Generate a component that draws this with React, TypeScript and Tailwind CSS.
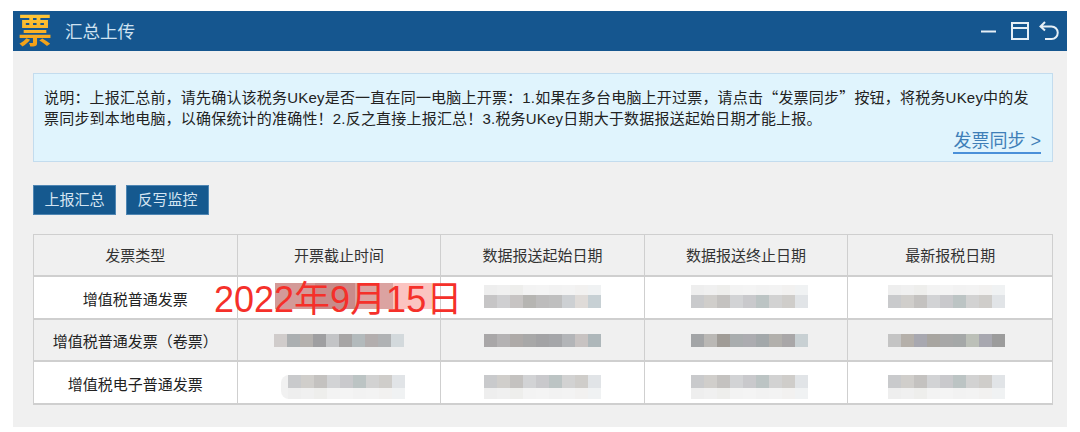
const fontStack = "font-['Liberation_Sans','Noto_Sans_CJK_SC',sans-serif]";

const headers = ["发票类型", "开票截止时间", "数据报送起始日期", "数据报送终止日期", "最新报税日期"];

// blurred-out date cells, one class per mosaic tile
const dark = ["bg-[#a9a7a8]", "bg-[#b4b2b3]", "bg-[#aeaaa8]", "bg-[#a8a8a8]", "bg-[#a3a3a5]", "bg-[#a5a6a9]", "bg-[#b3b5b8]", "bg-[#c8c3c2]", "bg-[#aeb7ba]"];
const darkWide = ["bg-[#d0cccb]", "bg-[#abafb1]", "bg-[#b4b1ae]", "bg-[#9f9fa1]", "bg-[#c3c4c6]", "bg-[#a7a5a5]", "bg-[#b3babc]", "bg-[#b3aeae]", "bg-[#b0b2b4]", "bg-[#d3d9dc]"];
const darkAlt = ["bg-[#a3a5a7]", "bg-[#bab8b5]", "bg-[#a09c97]", "bg-[#a9adae]", "bg-[#acacb0]", "bg-[#a3a8aa]", "bg-[#b2b0ac]", "bg-[#a9a7a8]", "bg-[#c8d0d3]"];
const darkEnd = ["bg-[#c4c4c4]", "bg-[#b5b0aa]", "bg-[#a8a8b0]", "bg-[#a8a5a0]", "bg-[#a8a8a8]", "bg-[#a5a8a8]", "bg-[#bcc0b8]", "bg-[#a8a8b0]", "bg-[#9c9c9c]"];
const mid = ["bg-[#c6c5c6]", "bg-[#cfcfd1]", "bg-[#c7c4c3]", "bg-[#b6b5b2]", "bg-[#bdbcbc]", "bg-[#bfbfbf]", "bg-[#cdd0d3]", "bg-[#dfdbd8]", "bg-[#c7d0d4]"];
const light = ["bg-[#c9cacc]", "bg-[#d0cecb]", "bg-[#c4c2c0]", "bg-[#d2d3d5]", "bg-[#c9c9cc]", "bg-[#bcc4c4]", "bg-[#d2d2d2]", "bg-[#cfcdca]", "bg-[#e1e4e7]"];
const paleTiles = ["bg-[#eeeeee]", "bg-[#f0f0f0]", "bg-[#eeeeec]", "bg-[#f3f3f3]", "bg-[#f4f4f4]", "bg-[#f2f2f2]", "bg-[#f3f3f3]", "bg-[#f2f1f0]", "bg-[#f0f2f3]"];

function TileRow({ tiles, height }: { tiles: string[]; height: string }) {
  return (
    <div className="flex">
      {tiles.map((t, i) => (
        <div key={i} className={`w-[13px] ${height} ${t}`} />
      ))}
    </div>
  );
}

function Mosaic({ tiles, above, below, className = "" }: { tiles: string[]; above?: boolean; below?: boolean; className?: string }) {
  return (
    <div className={`flex flex-col ${className}`}>
      {above && <TileRow tiles={paleTiles} height="h-[10px]" />}
      <TileRow tiles={tiles} height="h-[13px]" />
      {below && <TileRow tiles={paleTiles} height="h-[11px]" />}
    </div>
  );
}

function HeadCell({ label, last }: { label: string; last: boolean }) {
  return (
    <div className={`flex items-center justify-center h-[42px] pt-[3px] text-[15px] text-[#333] bg-[#f0f0f0] border-[#cfcfcf] border-b-2 ${last ? "" : "border-r"}`}>
      {label}
    </div>
  );
}

function Cell({ children, shade, last, height, bottom }: { children: React.ReactNode; shade: boolean; last?: boolean; height: string; bottom?: boolean }) {
  return (
    <div
      className={`flex items-center justify-center text-[15px] text-[#222] border-[#cfcfcf] ${height} ${shade ? "bg-[#f0f0f0]" : "bg-white"} ${last ? "" : "border-r"} ${bottom ? "" : "border-b-2"}`}
    >
      {children}
    </div>
  );
}

function Label({ text }: { text: string }) {
  return <span className="mt-[5px]">{text}</span>;
}

export default function App() {
  return (
    <div className={`w-[1080px] h-[432px] bg-white pt-[11px] pl-[13px] overflow-hidden ${fontStack}`}>
      <div className="relative w-[1054px] h-[416px] bg-[#f0f0f0]">
        <div className="flex items-center justify-between h-[40px] bg-[#15568f] pl-[5px] pr-[8px]">
          <div className="flex items-center">
            <span className="w-[34px] text-[34px] leading-[36px] font-bold text-transparent bg-clip-text bg-gradient-to-b from-[#ffc93a] to-[#f09a10]">票</span>
            <span className="ml-[13px] mt-[2px] text-[17.5px] text-[#cfe2f1]">汇总上传</span>
          </div>
          <div className="flex items-center">
            <svg width="15" height="20" viewBox="0 0 15 20" fill="none" stroke="#e6eff6" strokeWidth="2">
              <path d="M0 10.5h15" />
            </svg>
            <svg className="ml-[15px]" width="18" height="20" viewBox="0 0 18 20" fill="none" stroke="#e6eff6" strokeWidth="2">
              <path d="M1 2h16v16H1zM1 7h16" />
            </svg>
            <svg className="ml-[10px]" width="20" height="20" viewBox="0 0 20 20" fill="none" stroke="#e6eff6" strokeWidth="2">
              <path d="M6 1 1.5 5.5 6 9.5M2 5.5h10.5a5.5 5.5 0 0 1 0 12.5H6" />
            </svg>
          </div>
        </div>

        <div className="ml-[20px] w-[1020px] mt-[22px]">
          <div className="h-[89px] bg-[#e0f4fd] border border-[#c3dcee] pl-[10px] pr-[11px] pt-[12px] text-[15px] tracking-[0.2px] leading-[21px] text-[#222]">
            <p className="whitespace-nowrap">
              说明：上报汇总前，请先确认该税务UKey是否一直在同一电脑上开票：1.如果在多台电脑上开过票，请点击<span className="font-['Noto_Sans_CJK_SC',sans-serif]">“</span>发票同步<span className="font-['Noto_Sans_CJK_SC',sans-serif]">”</span>按钮，将税务UKey中的发
            </p>
            <p className="whitespace-nowrap">
              票同步到本地电脑，以确保统计的准确性！2.反之直接上报汇总！3.税务UKey日期大于数据报送起始日期才能上报。
            </p>
            <div className="flex justify-end mt-[2px]">
              <span className="text-[18px] tracking-normal leading-[21px] text-[#3f7fb8] border-b-2 border-[#4a90d9]">发票同步 &gt;</span>
            </div>
          </div>

          <div className="flex gap-[10px] mt-[23px]">
            <button className="w-[83px] h-[30px] bg-[#15598f] border border-[#4f86b3] text-[15px] text-[#d5e5f2]">上报汇总</button>
            <button className="w-[83px] h-[30px] bg-[#15598f] border border-[#4f86b3] text-[15px] text-[#d5e5f2]">反写监控</button>
          </div>

          <div className="relative mt-[19px] border border-[#cfcfcf] border-b-2 grid grid-cols-5">
            {headers.map((h, i) => (
              <HeadCell key={h} label={h} last={i === 4} />
            ))}

            <Cell shade={false} height="h-[43px]"><Label text="增值税普通发票" /></Cell>
            <Cell shade={false} height="h-[43px]">
              <div className="flex h-[26px] w-[157px] ml-[30px] mb-[4px] bg-[#fbc4c1]">
                <div className="w-[40px] bg-[#d39a98]" />
                <div className="w-[40px] bg-[#c88c8a]" />
                <div className="w-[38px] bg-[#dba3a1]" />
              </div>
            </Cell>
            <Cell shade={false} height="h-[43px]">
              <Mosaic tiles={mid} above className="mb-[2px]" />
            </Cell>
            <Cell shade={false} height="h-[43px]">
              <Mosaic tiles={light} above className="ml-[7px] mb-[2px]" />
            </Cell>
            <Cell shade={false} last height="h-[43px]">
              <Mosaic tiles={light} above className="mr-[7px] mb-[2px]" />
            </Cell>

            <Cell shade height="h-[42px]"><Label text="增值税普通发票（卷票）" /></Cell>
            <Cell shade height="h-[42px]">
              <Mosaic tiles={darkWide} />
            </Cell>
            <Cell shade height="h-[42px]">
              <Mosaic tiles={dark} />
            </Cell>
            <Cell shade height="h-[42px]">
              <Mosaic tiles={darkAlt} className="ml-[7px]" />
            </Cell>
            <Cell shade last height="h-[42px]">
              <Mosaic tiles={darkEnd} className="mr-[7px]" />
            </Cell>

            <Cell shade={false} bottom height="h-[41px]"><Label text="增值税电子普通发票" /></Cell>
            <Cell shade={false} bottom height="h-[41px]">
              <div className="ml-[9px] mt-[8px] pl-[7px] rounded-l-lg bg-[#f1f1f1]">
                <Mosaic tiles={light} below />
              </div>
            </Cell>
            <Cell shade={false} bottom height="h-[41px]">
              <Mosaic tiles={light} below className="mt-[8px]" />
            </Cell>
            <Cell shade={false} bottom height="h-[41px]">
              <Mosaic tiles={light} below className="ml-[7px] mt-[8px]" />
            </Cell>
            <Cell shade={false} bottom last height="h-[41px]">
              <Mosaic tiles={light} below className="mr-[7px] mt-[8px]" />
            </Cell>

            <span className="absolute left-[180px] top-[42px] text-[36px] leading-[46px] text-[#f5302a] whitespace-nowrap">
              2022年9月15日
            </span>
          </div>
        </div>
      </div>
    </div>
  );
}
